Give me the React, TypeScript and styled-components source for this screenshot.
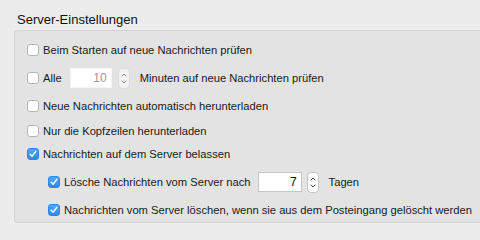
import React from "react";
import styled, { createGlobalStyle } from "styled-components";

const Global = createGlobalStyle`
  html, body { margin: 0; padding: 0; background: #ececec; }
  body { font-family: "Liberation Sans", Arial, sans-serif; color: #1a1a1a; }
  * { box-sizing: border-box; }
`;

const Page = styled.div`
  width: 480px;
  height: 240px;
  background: #ececec;
  padding: 12px 0 0 14px;
  overflow: hidden;
`;

const Title = styled.div`
  font-size: 13px;
  line-height: 16px;
  padding-left: 3px;
  color: #111;
`;

const Panel = styled.div`
  margin-top: 2px;
  width: 480px;
  height: 193px;
  background: #e3e3e3;
  border: 1px solid #d3d3d3;
  border-right: none;
  border-radius: 4px 0 0 4px;
  padding: 5px 0 0 12px;
  display: flex;
  flex-direction: column;
`;

const Row = styled.div<{ $h: number; $indent?: boolean }>`
  height: ${(p) => p.$h}px;
  display: flex;
  align-items: center;
  padding-left: ${(p) => (p.$indent ? 21 : 0)}px;
  font-size: 11.2px;
  white-space: nowrap;
`;

const Box = styled.span<{ $on?: boolean }>`
  width: 12px;
  height: 12px;
  border-radius: 3px;
  flex: none;
  display: inline-flex;
  align-items: center;
  justify-content: center;
  margin-right: 4px;
  background: ${(p) => (p.$on ? "linear-gradient(#4fa7fd, #2a8af5)" : "#fff")};
  border: 1px solid ${(p) => (p.$on ? "#2d86ea" : "#b5b5b5")};
  box-shadow: ${(p) => (p.$on ? "none" : "inset 0 1px 0 #fff")};
`;

const Field = styled.span<{ $w: number; $disabled?: boolean }>`
  width: ${(p) => p.$w}px;
  height: 20px;
  background: #fff;
  border: 1px solid ${(p) => (p.$disabled ? "#f4f4f4" : "#c6c6c6")};
  text-align: right;
  padding-right: 4px;
  line-height: 18px;
  font-size: 12px;
  color: ${(p) => (p.$disabled ? "#9a9a9a" : "#111")};
  flex: none;
`;

const Stepper = styled.span<{ $disabled?: boolean }>`
  width: 12px;
  height: 21px;
  border-radius: 4px;
  border: 1px solid ${(p) => (p.$disabled ? "#d8d8d8" : "#c4c4c4")};
  background: #fff;
  display: inline-flex;
  flex-direction: column;
  align-items: center;
  justify-content: center;
  gap: 3px;
  flex: none;
  opacity: ${(p) => (p.$disabled ? 0.55 : 1)};
`;

const Label = styled.span<{ $ml?: number }>`
  margin-left: ${(p) => p.$ml ?? 0}px;
`;

const Check = () => (
  <svg width="8" height="8" viewBox="0 0 8 8">
    <path d="M1.2 4.3 L3.1 6.3 L6.8 1.4" fill="none" stroke="#fff" strokeWidth="1.5" strokeLinecap="round" strokeLinejoin="round" />
  </svg>
);

const Chevron = ({ up }: { up?: boolean }) => (
  <svg width="6" height="4" viewBox="0 0 6 4">
    <path d={up ? "M0.8 3.3 L3 1 L5.2 3.3" : "M0.8 0.7 L3 3 L5.2 0.7"} fill="none" stroke="#444" strokeWidth="1" />
  </svg>
);

const CB = ({ on }: { on?: boolean }) => <Box $on={on}>{on && <Check />}</Box>;

const Spin = ({ disabled }: { disabled?: boolean }) => (
  <Stepper $disabled={disabled}>
    <Chevron up />
    <Chevron />
  </Stepper>
);

export default function App() {
  return (
    <Page>
      <Global />
      <Title>Server-Einstellungen</Title>
      <Panel>
        <Row $h={28}>
          <CB />
          <Label>Beim Starten auf neue Nachrichten prüfen</Label>
        </Row>
        <Row $h={28}>
          <CB />
          <Label>Alle</Label>
          <Label $ml={8} />
          <Field $w={42} $disabled>10</Field>
          <Label $ml={6} />
          <Spin disabled />
          <Label $ml={10}>Minuten auf neue Nachrichten prüfen</Label>
        </Row>
        <Row $h={28}>
          <CB />
          <Label>Neue Nachrichten automatisch herunterladen</Label>
        </Row>
        <Row $h={22}>
          <CB />
          <Label>Nur die Kopfzeilen herunterladen</Label>
        </Row>
        <Row $h={24}>
          <CB on />
          <Label>Nachrichten auf dem Server belassen</Label>
        </Row>
        <Row $h={32} $indent>
          <CB on />
          <Label>Lösche Nachrichten vom Server nach</Label>
          <Label $ml={7} />
          <Field $w={44}>7</Field>
          <Label $ml={5} />
          <Spin />
          <Label $ml={10}>Tagen</Label>
        </Row>
        <Row $h={24} $indent>
          <CB on />
          <Label>Nachrichten vom Server löschen, wenn sie aus dem Posteingang gelöscht werden</Label>
        </Row>
      </Panel>
    </Page>
  );
}
